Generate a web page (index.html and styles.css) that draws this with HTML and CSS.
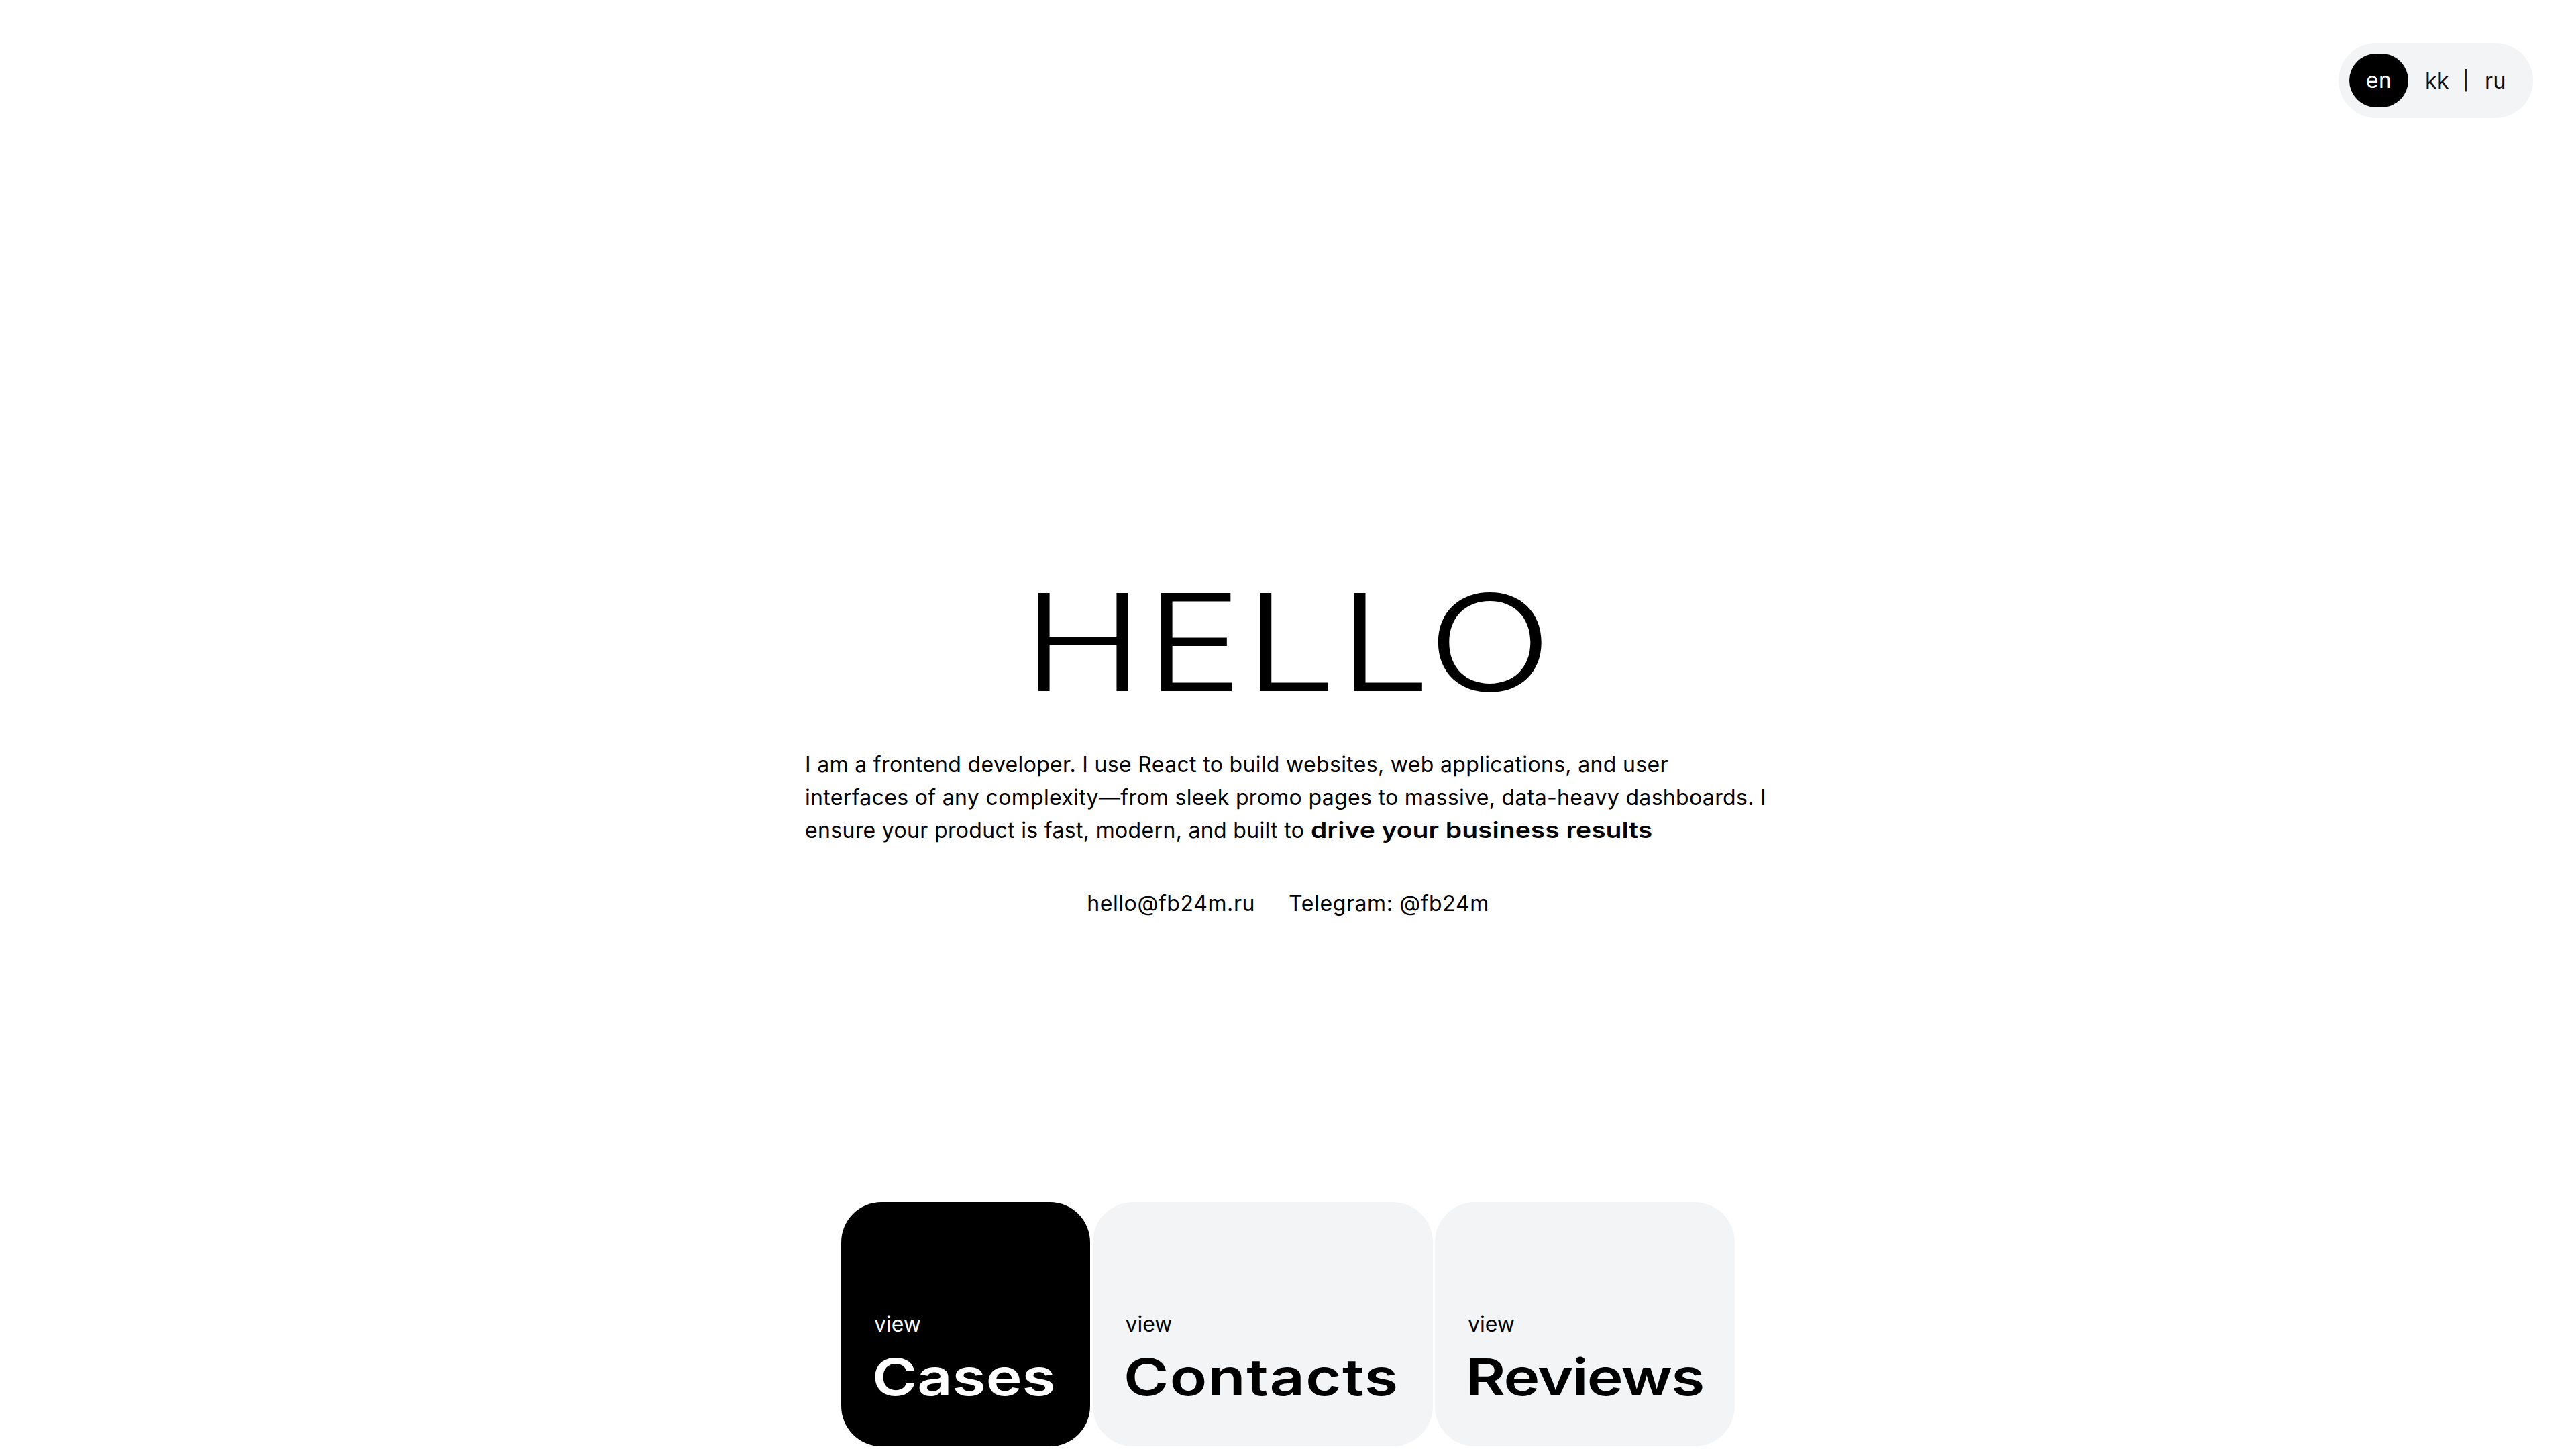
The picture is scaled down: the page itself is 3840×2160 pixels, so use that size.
FILE: index.html
```html
<!DOCTYPE html>
<html>
<head>
    <meta charset="UTF-8">
    <title>Hello</title>
    <link rel="stylesheet" href="styles.css">
</head>
<body>
    <div id="app">
        <div class="lang">
            <a class="lang-item lang-active">en</a>
            <a class="lang-item">kk</a>
            <span class="lang-sep">|</span>
            <a class="lang-item">ru</a>
        </div>
        <div class="hero">
            <h1 class="hero-title">HELLO</h1>
            <p class="hero-text">I am a frontend developer. I use React to build websites, web applications, and user<br>interfaces of any complexity—from sleek promo pages to massive, data-heavy dashboards. I<br>ensure your product is fast, modern, and built to <strong>drive your business results</strong></p>
            <div class="hero-contacts">
                <a>hello@fb24m.ru</a>
                <a>Telegram: @fb24m</a>
            </div>
        </div>
        <div class="nav">
            <a class="nav-card nav-card-active nav-cases">
                <span class="nav-view">view</span>
                <span class="nav-name">Cases</span>
            </a>
            <a class="nav-card nav-contacts">
                <span class="nav-view">view</span>
                <span class="nav-name">Contacts</span>
            </a>
            <a class="nav-card nav-reviews">
                <span class="nav-view">view</span>
                <span class="nav-name">Reviews</span>
            </a>
        </div>
    </div>
</body>
</html>
```

FILE: styles.css
```css
* {
  margin: 0px;
  padding: 0px;
  box-sizing: border-box;
}
html, body {
  height: 100%;
}
body {
  background: #fff;
  color: #000;
  font-family: "Inter", "Liberation Sans", sans-serif;
}
#app {
  height: 100%;
  display: flex;
  flex-direction: column;
  align-items: center;
  padding-bottom: 4px;
  position: relative;
}
.lang {
  position: absolute;
  top: 64px;
  right: 64px;
  width: 290px;
  height: 112px;
  padding: 16px;
  display: flex;
  align-items: center;
  background: #f3f4f6;
  border-radius: 56px;
  font-size: 32px;
  letter-spacing: 0.5px;
  color: #111;
}
.lang-item {
  display: block;
}
.lang-active {
  width: 88px;
  height: 80px;
  margin-right: 25px;
  line-height: 80px;
  text-align: center;
  color: #fff;
  background: #000;
  border-radius: 40px;
}
.lang-sep {
  margin: 0px 23px 0px 20px;
  font-size: 28px;
}
.hero {
  width: 1440px;
  padding-top: 847px;
}
.hero-title {
  font-size: 200px;
  line-height: 220px;
  font-weight: 300;
  text-align: center;
  letter-spacing: 2px;
  transform: scaleX(1.22);
}
.hero-text {
  margin-top: 48px;
  font-size: 32px;
  line-height: 49px;
  letter-spacing: 0.33px;
  white-space: nowrap;
}
.hero-text strong {
  display: inline-block;
  font-weight: 600;
  letter-spacing: 0px;
  transform: scaleX(1.22);
  transform-origin: left center;
}
.hero-contacts {
  margin-top: 60px;
  display: flex;
  justify-content: center;
  gap: 50px;
  font-size: 32px;
  line-height: 49px;
  letter-spacing: 0.6px;
}
.nav {
  margin-top: auto;
  display: flex;
  gap: 3.5px;
}
.nav-card {
  height: 364px;
  padding: 0px 0px 62px 46px;
  display: flex;
  flex-direction: column;
  justify-content: flex-end;
  background: #f3f4f6;
  border-radius: 60px;
}
.nav-card-active {
  background: #000;
  color: #fff;
}
.nav-cases {
  width: 371px;
}
.nav-contacts {
  width: 507px;
}
.nav-reviews {
  width: 447px;
}
.nav-view {
  margin-bottom: 12px;
  padding-left: 3px;
  font-size: 32px;
  line-height: 48px;
}
.nav-name {
  font-size: 76px;
  line-height: 84px;
  font-weight: 600;
  transform: scaleX(1.2);
  transform-origin: left center;
}
.nav-contacts .nav-name {
  letter-spacing: 1.3px;
}
.nav-reviews .nav-name {
  letter-spacing: -1.5px;
}
```
